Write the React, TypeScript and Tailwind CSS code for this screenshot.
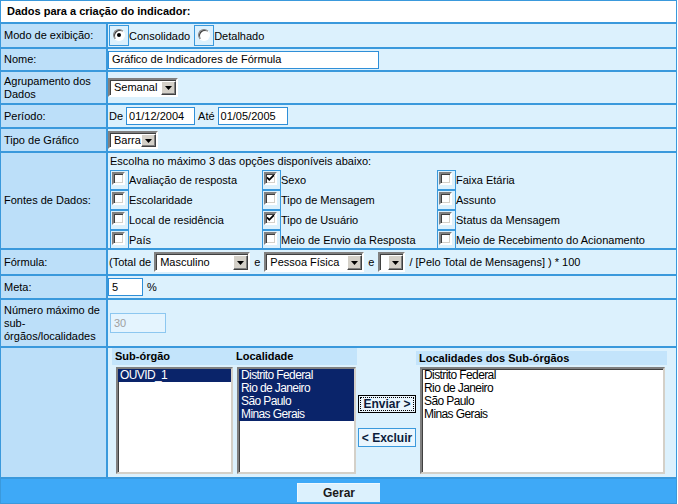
import React from "react";

const Sel = ({ cls, text }: { cls: string; text: string }) => (
  <div
    className={`flex items-stretch bg-white border-2 border-t-[#808080] border-l-[#808080] border-r-[#ffffff] border-b-[#ffffff] shadow-[inset_1px_1px_0_#404040] ${cls}`}
  >
    <span className="flex-1 pl-[4px] flex items-center whitespace-nowrap overflow-hidden text-[11px]">{text}</span>
    <span className="w-[15px] mt-[1px] mb-0 mr-0 bg-[#d4d0c8] border border-t-[#ffffff] border-l-[#ffffff] border-r-[#404040] border-b-[#404040] shadow-[inset_-1px_-1px_0_#808080] flex items-center justify-center">
      <svg width="7" height="4" viewBox="0 0 7 4">
        <path d="M0 0h7L3.5 4z" fill="#000" />
      </svg>
    </span>
  </div>
);

const Radio = ({ checked, label }: { checked?: boolean; label: string }) => (
  <div className="flex items-center">
    <div className="w-[20px] h-[21px] border border-[#3a99dc] pl-[3px] pt-[3px]">
      <div className="w-[12px] h-[12px] rounded-full bg-white border border-t-[#808080] border-l-[#808080] border-r-[#ffffff] border-b-[#ffffff] shadow-[inset_1px_1px_0_#404040] flex items-center justify-center">
        {checked && <div className="w-[4px] h-[4px] rounded-full bg-black" />}
      </div>
    </div>
    <span className="mt-[2px]">{label}</span>
  </div>
);

const Check = ({ checked, label }: { checked?: boolean; label: string }) => (
  <div className="flex items-center h-[20px]">
    <div className="w-[19px] h-[20px] border border-[#3a99dc] pl-[1px] pt-[1px] shrink-0">
      <div className="w-[13px] h-[13px] bg-white border-2 border-t-[#808080] border-l-[#808080] border-r-[#ffffff] border-b-[#ffffff] shadow-[inset_1px_1px_0_#404040,inset_-1px_-1px_0_#d4d0c8] flex items-center justify-center">
        {checked && (
          <svg width="7" height="7" viewBox="0 0 7 7">
            <path d="M0 2.5 L2.3 4.8 L7 0" stroke="#000" strokeWidth="1.8" fill="none" />
          </svg>
        )}
      </div>
    </div>
    <span className="whitespace-nowrap">{label}</span>
  </div>
);

const Label = ({ children }: { children: React.ReactNode }) => (
  <div className="bg-[#bcdff9] pl-[3px] flex items-center leading-[13px]">{children}</div>
);

const listBox =
  "bg-white border-2 border-t-[#808080] border-l-[#808080] border-r-[#d4d0c8] border-b-[#d4d0c8] shadow-[inset_1px_1px_0_#404040] text-[12px] leading-[13px] tracking-[-0.6px] overflow-hidden";

export default function App() {
  const val = "bg-[#dcf1fd] pl-[1px] flex items-center";
  return (
    <div className="w-[678px] h-[504px] bg-white font-['Liberation_Sans',Arial,sans-serif] text-[11px] text-black">
      <div className="w-[677px] h-[504px] bg-[#3a99dc] p-[1px] flex flex-col gap-[2px]">
        {/* header */}
        <div className="h-[21px] shrink-0 bg-white pl-[6px] flex items-center font-bold text-[11px]">
          Dados para a criação do indicador:
        </div>

        {/* Modo */}
        <div className="h-[23px] shrink-0 grid grid-cols-[105px_1fr] gap-x-[2px]">
          <Label>Modo de exibição:</Label>
          <div className="bg-[#dcf1fd] pl-[1px] pt-[1px] flex items-start gap-[4px]">
            <Radio checked label="Consolidado" />
            <Radio label="Detalhado" />
          </div>
        </div>

        {/* Nome */}
        <div className="h-[21px] shrink-0 grid grid-cols-[105px_1fr] gap-x-[2px]">
          <Label>Nome:</Label>
          <div className="bg-[#dcf1fd] flex items-center">
            <div className="w-[271px] h-[18px] bg-white border border-[#2f8fd8] pl-[3px] flex items-center">
              Gráfico de Indicadores de Fórmula
            </div>
          </div>
        </div>

        {/* Agrupamento */}
        <div className="h-[31px] shrink-0 grid grid-cols-[105px_1fr] gap-x-[2px]">
          <Label>
            Agrupamento dos
            <br />
            Dados
          </Label>
          <div className="bg-[#dcf1fd] flex items-center">
            <Sel cls="w-[70px] h-[19px]" text="Semanal" />
          </div>
        </div>

        {/* Período */}
        <div className="h-[22px] shrink-0 grid grid-cols-[105px_1fr] gap-x-[2px]">
          <Label>Período:</Label>
          <div className={val}>
            <span>De</span>
            <div className="ml-[3px] w-[69px] h-[18px] bg-white border border-[#2f8fd8] pl-[2px] flex items-center">
              01/12/2004
            </div>
            <span className="ml-[3px]">Até</span>
            <div className="ml-[3px] w-[70px] h-[18px] bg-white border border-[#2f8fd8] pl-[2px] flex items-center">
              01/05/2005
            </div>
          </div>
        </div>

        {/* Tipo */}
        <div className="h-[22px] shrink-0 grid grid-cols-[105px_1fr] gap-x-[2px]">
          <Label>Tipo de Gráfico</Label>
          <div className="bg-[#dcf1fd] flex items-center">
            <Sel cls="w-[50px] h-[18px]" text="Barra" />
          </div>
        </div>

        {/* Fontes */}
        <div className="h-[95px] shrink-0 grid grid-cols-[105px_1fr] gap-x-[2px]">
          <Label>Fontes de Dados:</Label>
          <div className="bg-[#dcf1fd] pl-[2px] flex flex-col overflow-hidden">
            <div className="h-[17px] leading-[17px] shrink-0">
              Escolha no máximo 3 das opções disponíveis abaixo:
            </div>
            <div className="shrink-0 grid grid-cols-[152px_175px_1fr] auto-rows-[20px]">
              <Check label="Avaliação de resposta" />
              <Check checked label="Sexo" />
              <Check label="Faixa Etária" />
              <Check label="Escolaridade" />
              <Check label="Tipo de Mensagem" />
              <Check label="Assunto" />
              <Check label="Local de residência" />
              <Check checked label="Tipo de Usuário" />
              <Check label="Status da Mensagem" />
              <Check label="País" />
              <Check label="Meio de Envio da Resposta" />
              <Check label="Meio de Recebimento do Acionamento" />
            </div>
          </div>
        </div>

        {/* Fórmula */}
        <div className="h-[24px] shrink-0 grid grid-cols-[105px_1fr] gap-x-[2px]">
          <Label>Fórmula:</Label>
          <div className={val}>
            <span>(Total de</span>
            <Sel cls="ml-[3px] w-[96px] h-[20px]" text="Masculino" />
            <span className="ml-[4px]">e</span>
            <Sel cls="ml-[4px] w-[100px] h-[20px]" text="Pessoa Física" />
            <span className="ml-[4px]">e</span>
            <Sel cls="ml-[4px] w-[27px] h-[20px]" text="" />
            <span className="ml-[4px]">/ [Pelo Total de Mensagens] ) * 100</span>
          </div>
        </div>

        {/* Meta */}
        <div className="h-[22px] shrink-0 grid grid-cols-[105px_1fr] gap-x-[2px]">
          <Label>Meta:</Label>
          <div className="bg-[#dcf1fd] flex items-center">
            <div className="w-[35px] h-[18px] bg-white border border-[#2f8fd8] pl-[3px] flex items-center">5</div>
            <span className="ml-[4px]">%</span>
          </div>
        </div>

        {/* Número */}
        <div className="h-[46px] shrink-0 grid grid-cols-[105px_1fr] gap-x-[2px]">
          <Label>
            Número máximo de
            <br />
            sub-
            <br />
            órgãos/localidades
          </Label>
          <div className="bg-[#dcf1fd] pl-[2px] flex items-center">
            <div className="w-[56px] h-[20px] bg-[#e4f4fe] border border-[#8cc7f0] pl-[3px] flex items-center text-[#a0a0a0]">
              30
            </div>
          </div>
        </div>

        {/* Lists */}
        <div className="h-[129px] shrink-0 grid grid-cols-[105px_1fr] gap-x-[2px]">
          <div className="bg-[#bcdff9]" />
          <div className="bg-[#dcf1fd] pl-[4px] flex items-start">
            <div className="w-[245px] grid grid-cols-[121px_124px]">
              <div className="h-[17px] bg-[#c3e4fb] pl-[3px] flex items-center font-bold">Sub-órgão</div>
              <div className="h-[17px] bg-[#c3e4fb] pl-[3px] flex items-center font-bold">Localidade</div>
              <div className={`mt-[2px] ml-[4px] w-[117px] h-[107px] ${listBox}`}>
                <div className="bg-[#0a246a] text-white pl-[2px]">OUVID_1</div>
              </div>
              <div className={`mt-[2px] ml-[4px] w-[119px] h-[107px] ${listBox}`}>
                <div className="bg-[#0a246a] text-white pl-[2px]">
                  <div>Distrito Federal</div>
                  <div>Rio de Janeiro</div>
                  <div>São Paulo</div>
                  <div>Minas Gerais</div>
                </div>
              </div>
            </div>
            <div className="ml-[1px] w-[58px] flex flex-col pt-[47px]">
              <div className="h-[18px] border border-black bg-[#eaf6fe] p-[1px]">
                <div className="h-full border border-dotted border-black flex items-center justify-center font-bold text-[12px] text-[#0c1c3c]">
                  Enviar &gt;
                </div>
              </div>
              <div className="mt-[15px] h-[19px] border border-[#3a99dc] bg-[#eaf6fe] flex items-center justify-center font-bold text-[12px] text-[#0c1c3c]">
                &lt; Excluir
              </div>
            </div>
            <div className="w-[251px] pt-[3px] flex flex-col">
              <div className="h-[14px] bg-[#c3e4fb] pl-[3px] flex items-center font-bold">Localidades dos Sub-órgãos</div>
              <div className={`mt-[2px] ml-[4px] w-[245px] h-[107px] ${listBox}`}>
                <div className="pl-[2px]">
                  <div>Distrito Federal</div>
                  <div>Rio de Janeiro</div>
                  <div>São Paulo</div>
                  <div>Minas Gerais</div>
                </div>
              </div>
            </div>
          </div>
        </div>

        {/* Gerar */}
        <div className="h-[24px] shrink-0 bg-[#3ea9f7] flex justify-center items-start pt-[4px]">
          <div className="w-[83px] h-[19px] bg-[#dcf1fd] border-t border-l border-[#eef8ff] flex items-center justify-center font-bold text-[12px] text-[#1a1a1a]">
            Gerar
          </div>
        </div>
      </div>
    </div>
  );
}
